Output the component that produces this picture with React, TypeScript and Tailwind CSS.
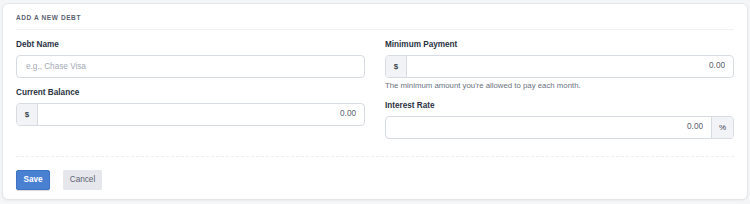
export default function App() {
  return (
    <div className="min-h-[204px] w-[750px] bg-[#f4f5f7] pt-[3px] font-['Liberation_Sans',Arial,sans-serif]">
      <div className="mx-[2px] rounded-[6px] border border-[#e4e6ea] bg-white px-[13px] pt-[10px] pb-[9px] shadow-[0_1px_2px_rgba(0,0,0,0.04)]">
        <div className="border-b border-[#f0f1f3] pb-[7px] text-[6.5px] font-semibold uppercase leading-[8px] tracking-[0.6px] text-[#5b6270]">
          Add a new debt
        </div>

        <div className="grid grid-cols-2 gap-x-[20px] pt-[10px]">
          <div>
            <label className="block text-[8.2px] font-bold leading-[10px] text-[#2a3242]">Debt Name</label>
            <input
              className="mt-[5px] block h-[23px] w-full rounded-[4px] border border-[#d7dbe2] bg-white px-[9px] text-[8.2px] text-[#2a3242] outline-none placeholder:text-[#a3a9b3]"
              placeholder="e.g., Chase Visa"
            />

            <label className="mt-[10px] block text-[8.2px] font-bold leading-[10px] text-[#2a3242]">Current Balance</label>
            <div className="mt-[5px] flex h-[23px] overflow-hidden rounded-[4px] border border-[#d7dbe2]">
              <span className="flex w-[21px] items-center justify-center border-r border-[#d7dbe2] bg-[#f1f3f6] text-[8px] font-bold text-[#3a4252]">$</span>
              <input
                className="min-w-0 flex-1 px-[8px] text-right text-[8.2px] text-[#4b5261] outline-none placeholder:text-[#5a616e]"
                placeholder="0.00"
              />
            </div>
          </div>

          <div>
            <label className="block text-[8.2px] font-bold leading-[10px] text-[#2a3242]">Minimum Payment</label>
            <div className="mt-[5px] flex h-[23px] overflow-hidden rounded-[4px] border border-[#d7dbe2]">
              <span className="flex w-[21px] items-center justify-center border-r border-[#d7dbe2] bg-[#f1f3f6] text-[8px] font-bold text-[#3a4252]">$</span>
              <input
                className="min-w-0 flex-1 px-[8px] text-right text-[8.2px] text-[#4b5261] outline-none placeholder:text-[#5a616e]"
                placeholder="0.00"
              />
            </div>
            <p className="mt-[3px] text-[7.8px] leading-[9px] text-[#6b7280]">
              The minimum amount you're allowed to pay each month.
            </p>

            <label className="mt-[11px] block text-[8.2px] font-bold leading-[10px] text-[#2a3242]">Interest Rate</label>
            <div className="mt-[5px] flex h-[23px] overflow-hidden rounded-[4px] border border-[#d7dbe2]">
              <input
                className="min-w-0 flex-1 px-[8px] text-right text-[8.2px] text-[#4b5261] outline-none placeholder:text-[#5a616e]"
                placeholder="0.00"
              />
              <span className="flex w-[22px] items-center justify-center border-l border-[#d7dbe2] bg-[#f1f3f6] text-[8px] text-[#3a4252]">%</span>
            </div>
          </div>
        </div>

        <div className="mt-[17px] border-t border-dashed border-[#eceef1] pt-[13px]">
          <div className="flex gap-[13px]">
            <button className="h-[20px] w-[34px] rounded-[2px] border border-[#3d72c4] bg-[#4a80d2] text-[8.2px] font-bold text-white shadow-[0_1px_1px_rgba(0,0,0,0.15)]">
              Save
            </button>
            <button className="h-[20px] w-[39px] rounded-[2px] bg-[#e6e7ec] text-[8.2px] text-[#5d6370]">
              Cancel
            </button>
          </div>
        </div>
      </div>
    </div>
  );
}
